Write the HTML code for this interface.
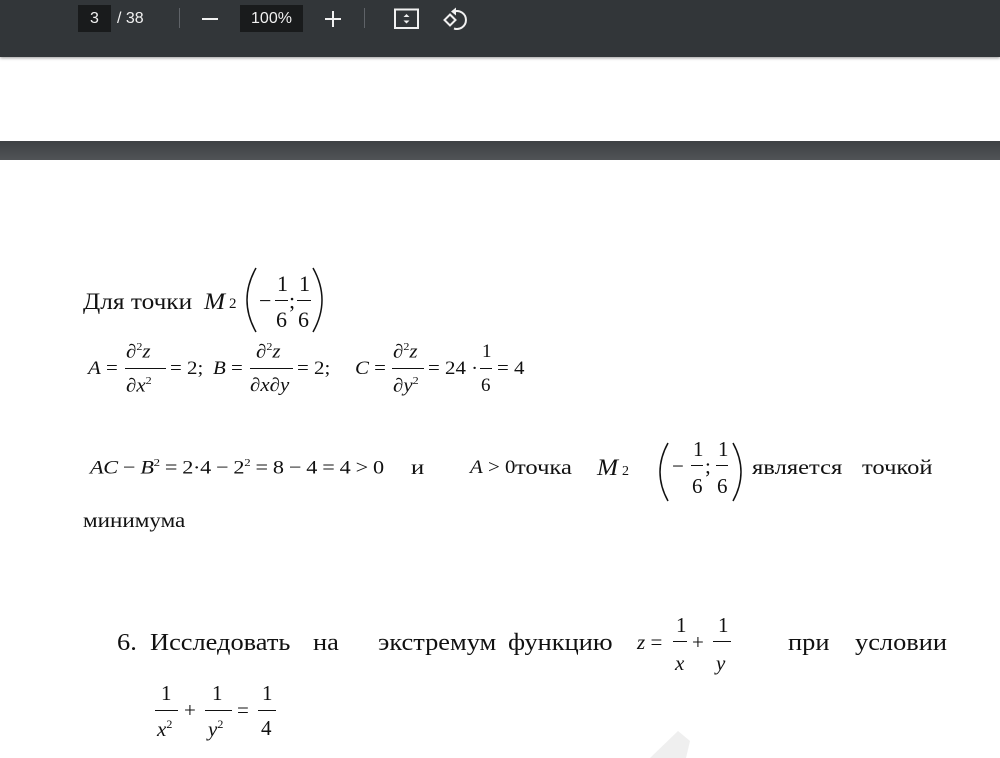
<!DOCTYPE html>
<html><head><meta charset="utf-8"><style>
body{margin:0;width:1000px;height:758px;overflow:hidden;background:#fff;position:relative;font-family:"Liberation Serif","DejaVu Serif",serif;color:#111}
.t{position:absolute;white-space:nowrap;line-height:1;font-family:"Liberation Serif","DejaVu Serif",serif;transform-origin:0 0}
.w{transform:scaleX(1.1)}
.w2{transform:scaleX(1.17)}
.i{font-style:italic}
.bar{position:absolute;height:1.2px;background:#111}
.tb{position:absolute;left:0;top:0;width:1000px;height:57px;background:#323639;box-shadow:0 1px 3px rgba(0,0,0,.4)}
.ui{position:absolute;font-family:"Liberation Sans",sans-serif;color:#f1f1f1;font-size:16px;line-height:27px}
</style></head><body>
<div class="tb">
 <div class="ui" style="left:78px;top:5px;width:33px;height:27px;background:#191b1c;text-align:center">3</div>
 <div class="ui" style="left:117px;top:5px">/ 38</div>
 <div style="position:absolute;left:179px;top:8px;width:1px;height:20px;background:#5f6368"></div>
 <div style="position:absolute;left:202px;top:18px;width:16px;height:2px;background:#f1f1f1"></div>
 <div class="ui" style="left:240px;top:5px;width:63px;height:27px;background:#191b1c;text-align:center">100%</div>
 <div style="position:absolute;left:325px;top:18px;width:16px;height:2px;background:#f1f1f1"></div>
 <div style="position:absolute;left:332px;top:11px;width:2px;height:16px;background:#f1f1f1"></div>
 <div style="position:absolute;left:364px;top:8px;width:1px;height:20px;background:#5f6368"></div>
 <svg style="position:absolute;left:390px;top:5px" width="85" height="30" viewBox="390 5 85 30">
  <rect x="395" y="9.5" width="23" height="18.5" fill="none" stroke="#f1f1f1" stroke-width="2"/>
  <path d="M403.5 17l3-3 3 3zM403.5 20.5l3 3 3-3z" fill="#f1f1f1"/>
  <path d="M450 14.5l5.5 5.5-5.5 5.5-5.5-5.5z" fill="none" stroke="#f1f1f1" stroke-width="2"/>
  <path d="M454 11.5a9 9 0 1 1 0 17" fill="none" stroke="#f1f1f1" stroke-width="2"/>
  <path d="M451 11.5l5-4v8z" fill="#f1f1f1"/>
 </svg>
</div>
<div style="position:absolute;left:0;top:141px;width:1000px;height:19px;background:linear-gradient(#3d4043,#505356)"></div>

<svg style="position:absolute;left:0;top:0" width="1000" height="758">
 <g fill="none" stroke="#111" stroke-width="1.5">
  <path d="M256 268Q238 300 256 332"/><path d="M313 268Q331 300 313 332"/>
  <path d="M668 443Q652 472 668 501"/><path d="M733 443Q749 472 733 501"/>
 </g>
 <polygon points="650,758 678,731 690,741 686,758" fill="#efefef"/>
</svg>

<!-- line 1 -->
<div class="t w" style="left:83px;top:290px;font-size:23px">Для точки</div>
<div class="t i w" style="left:204px;top:290px;font-size:23px">M</div>
<div class="t" style="left:229px;top:297px;font-size:15px">2</div>
<div class="t" style="left:259px;top:290px;font-size:22px">−</div>
<div class="t" style="left:277px;top:273px;font-size:22px">1</div><div class="bar" style="left:275px;top:300px;width:13px"></div><div class="t" style="left:276px;top:309px;font-size:22px">6</div>
<div class="t" style="left:289px;top:290px;font-size:22px">;</div>
<div class="t" style="left:299px;top:273px;font-size:22px">1</div><div class="bar" style="left:297px;top:300px;width:14px"></div><div class="t" style="left:298px;top:309px;font-size:22px">6</div>

<!-- line 2 -->
<div class="t w" style="left:88px;top:359px;font-size:19px"><span class="i">A</span> =</div>
<div class="t w" style="left:126px;top:342px;font-size:19px">∂<sup style="font-size:11px">2</sup><span class="i">z</span></div>
<div class="bar" style="left:125px;top:368px;width:41px"></div>
<div class="t w" style="left:126px;top:376px;font-size:19px">∂<span class="i">x</span><sup style="font-size:11px">2</sup></div>
<div class="t w" style="left:170px;top:359px;font-size:19px">= 2;</div>
<div class="t w" style="left:213px;top:359px;font-size:19px"><span class="i">B</span> =</div>
<div class="t w" style="left:256px;top:342px;font-size:19px">∂<sup style="font-size:11px">2</sup><span class="i">z</span></div>
<div class="bar" style="left:250px;top:368px;width:43px"></div>
<div class="t w" style="left:250px;top:376px;font-size:19px">∂<span class="i">x</span>∂<span class="i">y</span></div>
<div class="t w" style="left:297px;top:359px;font-size:19px">= 2;</div>
<div class="t w" style="left:355px;top:359px;font-size:19px"><span class="i">C</span> =</div>
<div class="t w" style="left:393px;top:342px;font-size:19px">∂<sup style="font-size:11px">2</sup><span class="i">z</span></div>
<div class="bar" style="left:392px;top:368px;width:32px"></div>
<div class="t w" style="left:393px;top:376px;font-size:19px">∂<span class="i">y</span><sup style="font-size:11px">2</sup></div>
<div class="t w" style="left:428px;top:359px;font-size:19px">= 24 ·</div>
<div class="t" style="left:482px;top:342px;font-size:19px">1</div><div class="bar" style="left:480px;top:368px;width:12px"></div><div class="t" style="left:481px;top:376px;font-size:19px">6</div>
<div class="t w" style="left:497px;top:359px;font-size:19px">= 4</div>

<!-- line 3 -->
<div class="t w2" style="left:90px;top:458px;font-size:19px;letter-spacing:-.3px"><span class="i">AC</span> − <span class="i">B</span><sup style="font-size:11px">2</sup> = 2·4 − 2<sup style="font-size:11px">2</sup> = 8 − 4 = 4 &gt; 0</div>
<div class="t w2" style="left:411px;top:457px;font-size:21px">и</div>
<div class="t w" style="left:470px;top:458px;font-size:19px"><span class="i">A</span> &gt; 0</div>
<div class="t w2" style="left:515px;top:457px;font-size:21px">точка</div>
<div class="t i w" style="left:597px;top:456px;font-size:23px">M</div>
<div class="t" style="left:622px;top:465px;font-size:14px">2</div>
<div class="t" style="left:672px;top:456px;font-size:21px">−</div>
<div class="t" style="left:693px;top:439px;font-size:21px">1</div><div class="bar" style="left:691px;top:465px;width:12px"></div><div class="t" style="left:692px;top:476px;font-size:21px">6</div>
<div class="t" style="left:705px;top:456px;font-size:21px">;</div>
<div class="t" style="left:718px;top:439px;font-size:21px">1</div><div class="bar" style="left:716px;top:465px;width:12px"></div><div class="t" style="left:717px;top:476px;font-size:21px">6</div>
<div class="t w2" style="left:752px;top:457px;font-size:21px">является</div>
<div class="t w2" style="left:862px;top:457px;font-size:21px">точкой</div>
<div class="t w" style="left:83px;top:510px;font-size:21px">минимума</div>

<!-- line 6 -->
<div class="t w" style="left:117px;top:631px;font-size:24px">6.</div>
<div class="t w" style="left:150px;top:631px;font-size:24px">Исследовать</div>
<div class="t w" style="left:313px;top:631px;font-size:24px">на</div>
<div class="t w" style="left:378px;top:631px;font-size:24px">экстремум</div>
<div class="t w" style="left:508px;top:631px;font-size:24px">функцию</div>
<div class="t" style="left:637px;top:632px;font-size:21px"><span class="i">z</span> =</div>
<div class="t" style="left:676px;top:615px;font-size:21px">1</div><div class="bar" style="left:673px;top:641px;width:14px"></div><div class="t i" style="left:675px;top:653px;font-size:21px">x</div>
<div class="t" style="left:692px;top:632px;font-size:21px">+</div>
<div class="t" style="left:718px;top:615px;font-size:21px">1</div><div class="bar" style="left:713px;top:641px;width:18px"></div><div class="t i" style="left:716px;top:653px;font-size:21px">y</div>
<div class="t w" style="left:788px;top:631px;font-size:24px">при</div>
<div class="t w" style="left:855px;top:631px;font-size:24px">условии</div>

<!-- last -->
<div class="t" style="left:161px;top:683px;font-size:21px">1</div><div class="bar" style="left:155px;top:710px;width:23px"></div><div class="t" style="left:157px;top:718px;font-size:21px"><span class="i">x</span><sup style="font-size:12px">2</sup></div>
<div class="t" style="left:184px;top:700px;font-size:21px">+</div>
<div class="t" style="left:212px;top:683px;font-size:21px">1</div><div class="bar" style="left:205px;top:710px;width:27px"></div><div class="t" style="left:208px;top:718px;font-size:21px"><span class="i">y</span><sup style="font-size:12px">2</sup></div>
<div class="t" style="left:237px;top:700px;font-size:21px">=</div>
<div class="t" style="left:262px;top:683px;font-size:21px">1</div><div class="bar" style="left:258px;top:710px;width:18px"></div><div class="t" style="left:261px;top:718px;font-size:21px">4</div>
</body></html>
